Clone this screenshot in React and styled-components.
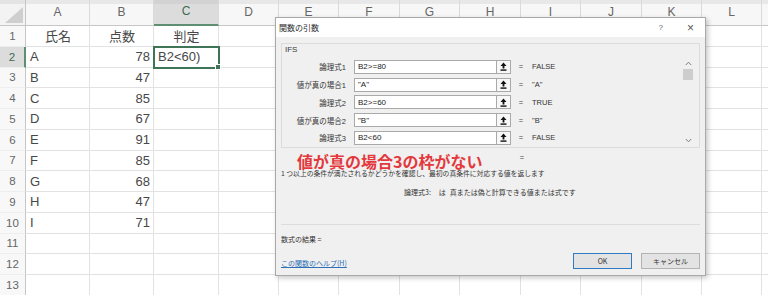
import React from 'react';
import styled, { createGlobalStyle } from 'styled-components';

const GlobalStyle = createGlobalStyle`
    html, body {
        margin: 0;
        padding: 0;
        background: #ffffff;
        overflow: hidden;
    }
    body {
        width: 768px;
        height: 295px;
        font-family: "Liberation Sans", "Noto Sans CJK JP", sans-serif;
    }
`;

const COLUMNS = [
    { name: 'A', width: 64 },
    { name: 'B', width: 64 },
    { name: 'C', width: 65 },
    { name: 'D', width: 60 },
    { name: 'E', width: 60 },
    { name: 'F', width: 61 },
    { name: 'G', width: 60 },
    { name: 'H', width: 61 },
    { name: 'I', width: 60 },
    { name: 'J', width: 61 },
    { name: 'K', width: 60 },
    { name: 'L', width: 60 },
    { name: '', width: 60 },
];

const scores = [
    ['A', '78'],
    ['B', '47'],
    ['C', '85'],
    ['D', '67'],
    ['E', '91'],
    ['F', '85'],
    ['G', '68'],
    ['H', '47'],
    ['I', '71'],
];

const fields = [
    { label: '論理式1', input: 'B2>=80', value: 'FALSE' },
    { label: '値が真の場合1', input: '"A"', value: '"A"' },
    { label: '論理式2', input: 'B2>=60', value: 'TRUE' },
    { label: '値が真の場合2', input: '"B"', value: '"B"' },
    { label: '論理式3', input: 'B2<60', value: 'FALSE' },
];

function cellFor(row, col) {
    if (row === 1) {
        const heads = ['氏名', '点数', '判定'];
        return col < 3 ? { text: heads[col], align: 'center' } : null;
    }
    const data = scores[row - 2];
    if (!data) return null;
    if (col === 0) return { text: data[0], align: 'left' };
    if (col === 1) return { text: data[1], align: 'right' };
    if (row === 2 && col === 2) return { text: 'B2<60)', align: 'left' };
    return null;
}

function CollapseIcon() {
    return (
        <svg width="7" height="9" viewBox="0 0 7 9">
            <path d="M3.5 0.5 L6.5 4 L4.4 4 L4.4 6.6 L2.6 6.6 L2.6 4 L0.5 4 Z" fill="#111" />
            <rect x="0.5" y="7.4" width="6" height="1.4" fill="#111" />
        </svg>
    );
}

function Chevron({ down }) {
    return (
        <svg width="7" height="5" viewBox="0 0 7 5">
            <polyline
                points={down ? '0.8,1 3.5,3.8 6.2,1' : '0.8,4 3.5,1.2 6.2,4'}
                fill="none"
                stroke="#7a7a7a"
                strokeWidth="1"
            />
        </svg>
    );
}

function App() {
    const rows = Array.from({ length: 13 }, (_, i) => i + 1);

    return (
        <>
            <GlobalStyle />
            <Page>
                <Sheet>
                    <Corner>
                        <svg width="20" height="18" viewBox="0 0 20 18">
                            <polygon points="19,1 19,17 1,17" fill="#cfcfcf" />
                        </svg>
                    </Corner>
                    {COLUMNS.map((c, i) => (
                        <ColHeader key={c.name + i} $selected={i === 2}>
                            {c.name}
                        </ColHeader>
                    ))}
                    {rows.map((r) => (
                        <React.Fragment key={r}>
                            <RowHeader $selected={r === 2}>{r}</RowHeader>
                            {COLUMNS.map((c, i) => {
                                const cell = cellFor(r, i);
                                return (
                                    <Cell
                                        key={i}
                                        $align={cell ? cell.align : 'left'}
                                        $active={r === 2 && i === 2}
                                    >
                                        {cell ? cell.text : ''}
                                    </Cell>
                                );
                            })}
                        </React.Fragment>
                    ))}
                </Sheet>

                <Dialog>
                    <TitleBar>
                        <span>関数の引数</span>
                        <TitleButtons>
                            <span>?</span>
                            <CloseMark>×</CloseMark>
                        </TitleButtons>
                    </TitleBar>

                    <Body>
                        <GroupBox>
                            <GroupLabel>IFS</GroupLabel>
                            <FieldArea>
                                <FieldList>
                                    {fields.map((f) => (
                                        <FieldRow key={f.label}>
                                            <FieldLabel>{f.label}</FieldLabel>
                                            <InputBox>{f.input}</InputBox>
                                            <RefButton>
                                                <CollapseIcon />
                                            </RefButton>
                                            <Eq>=</Eq>
                                            <FieldValue>{f.value}</FieldValue>
                                        </FieldRow>
                                    ))}
                                </FieldList>
                                <ScrollBar>
                                    <Chevron />
                                    <Thumb />
                                    <ScrollSpacer />
                                    <Chevron down />
                                </ScrollBar>
                            </FieldArea>
                        </GroupBox>

                        <AnnotRow>
                            <RedNote>値が真の場合3の枠がない</RedNote>
                            <AnnotEq>=</AnnotEq>
                        </AnnotRow>

                        <Desc>1 つ以上の条件が満たされるかどうかを確認し、最初の真条件に対応する値を返します</Desc>

                        <Hint>
                            <span>論理式3:</span>
                            <HintWord>は</HintWord>
                            <span>真または偽と計算できる値または式です</span>
                        </Hint>

                        <Result>数式の結果 =</Result>

                        <Footer>
                            <HelpLink>この関数のヘルプ(H)</HelpLink>
                            <ButtonGroup>
                                <DialogButton $primary>OK</DialogButton>
                                <DialogButton>キャンセル</DialogButton>
                            </ButtonGroup>
                        </Footer>
                    </Body>
                </Dialog>
            </Page>
        </>
    );
}

const Page = styled.div`
    position: relative;
    width: 768px;
    height: 295px;
    overflow: hidden;
    background: #ffffff;
`;

const Sheet = styled.div`
    display: grid;
    grid-template-columns: 26px ${COLUMNS.map((c) => c.width + 'px').join(' ')};
    grid-template-rows: 26px repeat(13, 20.75px);
    font-family: "Liberation Sans", "Noto Sans CJK JP", sans-serif;
    color: #474747;
`;

const Corner = styled.div`
    box-sizing: border-box;
    background: #f3f3f3;
    box-shadow: inset 0 4px 0 #e4e4e4;
    border-right: 1px solid #c6c6c6;
    border-bottom: 1px solid #c6c6c6;
    display: flex;
    align-items: flex-end;
    justify-content: flex-end;
    padding: 0 1px 1px 0;
`;

const ColHeader = styled.div`
    box-sizing: border-box;
    display: flex;
    align-items: center;
    justify-content: center;
    padding-bottom: 2px;
    font-size: 12px;
    color: ${(p) => (p.$selected ? '#3d6a50' : '#666666')};
    background: ${(p) => (p.$selected ? '#dcdcdc' : '#f7f7f7')};
    box-shadow: inset 0 4px 0 ${(p) => (p.$selected ? '#d2d2d2' : '#e8e8e8')};
    border-right: 1px solid #dadada;
    border-bottom: ${(p) => (p.$selected ? '2px solid #5f8f72' : '1px solid #c6c6c6')};
`;

const RowHeader = styled.div`
    box-sizing: border-box;
    display: flex;
    align-items: center;
    justify-content: center;
    font-size: 11.5px;
    color: ${(p) => (p.$selected ? '#3d6a50' : '#666666')};
    background: ${(p) => (p.$selected ? '#dcdcdc' : '#f8f8f8')};
    border-right: ${(p) => (p.$selected ? '2px solid #5f8f72' : '1px solid #c6c6c6')};
    border-bottom: 1px solid #eeeeee;
`;

const Cell = styled.div`
    box-sizing: border-box;
    position: relative;
    display: flex;
    align-items: center;
    justify-content: ${(p) =>
        p.$align === 'center' ? 'center' : p.$align === 'right' ? 'flex-end' : 'flex-start'};
    padding: 0 3px 0 4px;
    font-size: 13px;
    white-space: nowrap;
    border-right: 1px solid #e2e2e2;
    border-bottom: 1px solid #e2e2e2;
    ${(p) =>
        p.$active &&
        `
        outline: 2px solid #3f7556;
        outline-offset: -1px;
        z-index: 1;
        &::after {
            content: '';
            position: absolute;
            right: -3px;
            bottom: -3px;
            width: 4px;
            height: 4px;
            background: #3f7556;
            border: 1px solid #ffffff;
        }
    `}
`;

const Dialog = styled.div`
    position: absolute;
    left: 275px;
    top: 17px;
    width: 431px;
    height: 259px;
    box-sizing: border-box;
    border: 1px solid #a8a8a8;
    background: #f0f0f0;
    box-shadow: 2px 2px 5px rgba(0, 0, 0, 0.22);
    display: flex;
    flex-direction: column;
    font-family: "Liberation Sans", "Noto Sans CJK JP", sans-serif;
    color: #333333;
    z-index: 5;
`;

const TitleBar = styled.div`
    height: 19px;
    background: #ffffff;
    display: flex;
    align-items: center;
    justify-content: space-between;
    padding: 0 11px 0 3px;
    font-size: 8px;
    color: #2a2a2a;
`;

const TitleButtons = styled.div`
    display: flex;
    align-items: center;
    gap: 24px;
    color: #666666;
    font-size: 8px;
`;

const CloseMark = styled.span`
    font-size: 12px;
    font-weight: 300;
    color: #555555;
`;

const Body = styled.div`
    flex: 1;
    display: flex;
    flex-direction: column;
    padding: 0 5px 0 5px;
`;

const GroupBox = styled.div`
    margin-top: 6px;
    height: 105px;
    box-sizing: border-box;
    border: 1px solid #dcdcdc;
    display: flex;
    flex-direction: column;
`;

const GroupLabel = styled.div`
    padding: 1px 0 0 3px;
    font-size: 8px;
    line-height: 9px;
    color: #3a3a3a;
`;

const FieldArea = styled.div`
    flex: 1;
    display: flex;
    margin-top: 4px;
`;

const FieldList = styled.div`
    display: flex;
    flex-direction: column;
`;

const FieldRow = styled.div`
    height: 17.75px;
    display: flex;
    align-items: center;
`;

const FieldLabel = styled.div`
    width: 64px;
    text-align: right;
    font-size: 7.5px;
    white-space: nowrap;
    color: #333333;
`;

const InputBox = styled.div`
    margin-left: 8px;
    width: 143px;
    height: 14px;
    box-sizing: border-box;
    border: 1px solid #a9a9a9;
    background: #ffffff;
    display: flex;
    align-items: center;
    padding-left: 3px;
    font-size: 8px;
    color: #222222;
`;

const RefButton = styled.div`
    width: 14px;
    height: 14px;
    box-sizing: border-box;
    border: 1px solid #a9a9a9;
    border-left: none;
    background: #f7f7f7;
    display: flex;
    align-items: center;
    justify-content: center;
`;

const Eq = styled.div`
    margin-left: 4px;
    width: 12px;
    text-align: center;
    font-size: 7.5px;
    color: #444444;
`;

const FieldValue = styled.div`
    margin-left: 5px;
    font-size: 7.5px;
    color: #333333;
`;

const ScrollBar = styled.div`
    margin-left: auto;
    margin-right: 5px;
    width: 12px;
    padding: 3px 0 4px;
    display: flex;
    flex-direction: column;
    align-items: center;
`;

const Thumb = styled.div`
    margin-top: 3px;
    width: 10px;
    height: 11px;
    background: #cdcdcd;
`;

const ScrollSpacer = styled.div`
    flex: 1;
`;

const AnnotRow = styled.div`
    margin-top: 2px;
    height: 19px;
    display: grid;
    grid-template-columns: 235px 12px;
`;

const RedNote = styled.div`
    padding: 2px 0 0 16px;
    font-family: "Noto Sans CJK JP", sans-serif;
    font-size: 16px;
    font-weight: 700;
    line-height: 18px;
    color: #e3383c;
    white-space: nowrap;
`;

const AnnotEq = styled.div`
    padding-top: 3px;
    text-align: center;
    font-size: 7.5px;
    color: #444444;
`;

const Desc = styled.div`
    font-family: "Noto Sans CJK JP", sans-serif;
    font-size: 6.8px;
    line-height: 9px;
    white-space: nowrap;
    color: #333333;
`;

const Hint = styled.div`
    margin-top: 10px;
    padding-left: 123px;
    display: flex;
    font-family: "Noto Sans CJK JP", sans-serif;
    font-size: 7px;
    line-height: 9px;
    white-space: nowrap;
    color: #333333;
`;

const HintWord = styled.span`
    margin: 0 4px 0 8px;
`;

const Result = styled.div`
    margin-top: 27px;
    border-top: 1px solid #dcdcdc;
    padding-top: 10px;
    font-family: "Noto Sans CJK JP", sans-serif;
    font-size: 7px;
    line-height: 9px;
    color: #333333;
`;

const Footer = styled.div`
    margin-top: 9px;
    display: flex;
    align-items: flex-end;
    justify-content: space-between;
`;

const HelpLink = styled.span`
    margin-bottom: 1px;
    font-family: "Noto Sans CJK JP", sans-serif;
    font-size: 7px;
    line-height: 9px;
    color: #2f6fb5;
    text-decoration: underline;
`;

const ButtonGroup = styled.div`
    display: flex;
    gap: 9px;
`;

const DialogButton = styled.div`
    width: 59px;
    height: 16px;
    box-sizing: border-box;
    border: 1px solid ${(p) => (p.$primary ? '#2f7ac2' : '#b3b3b3')};
    background: #e3e3e3;
    display: flex;
    align-items: center;
    justify-content: center;
    font-family: "Noto Sans CJK JP", sans-serif;
    font-size: 7px;
    color: #333333;
`;

export default App;
